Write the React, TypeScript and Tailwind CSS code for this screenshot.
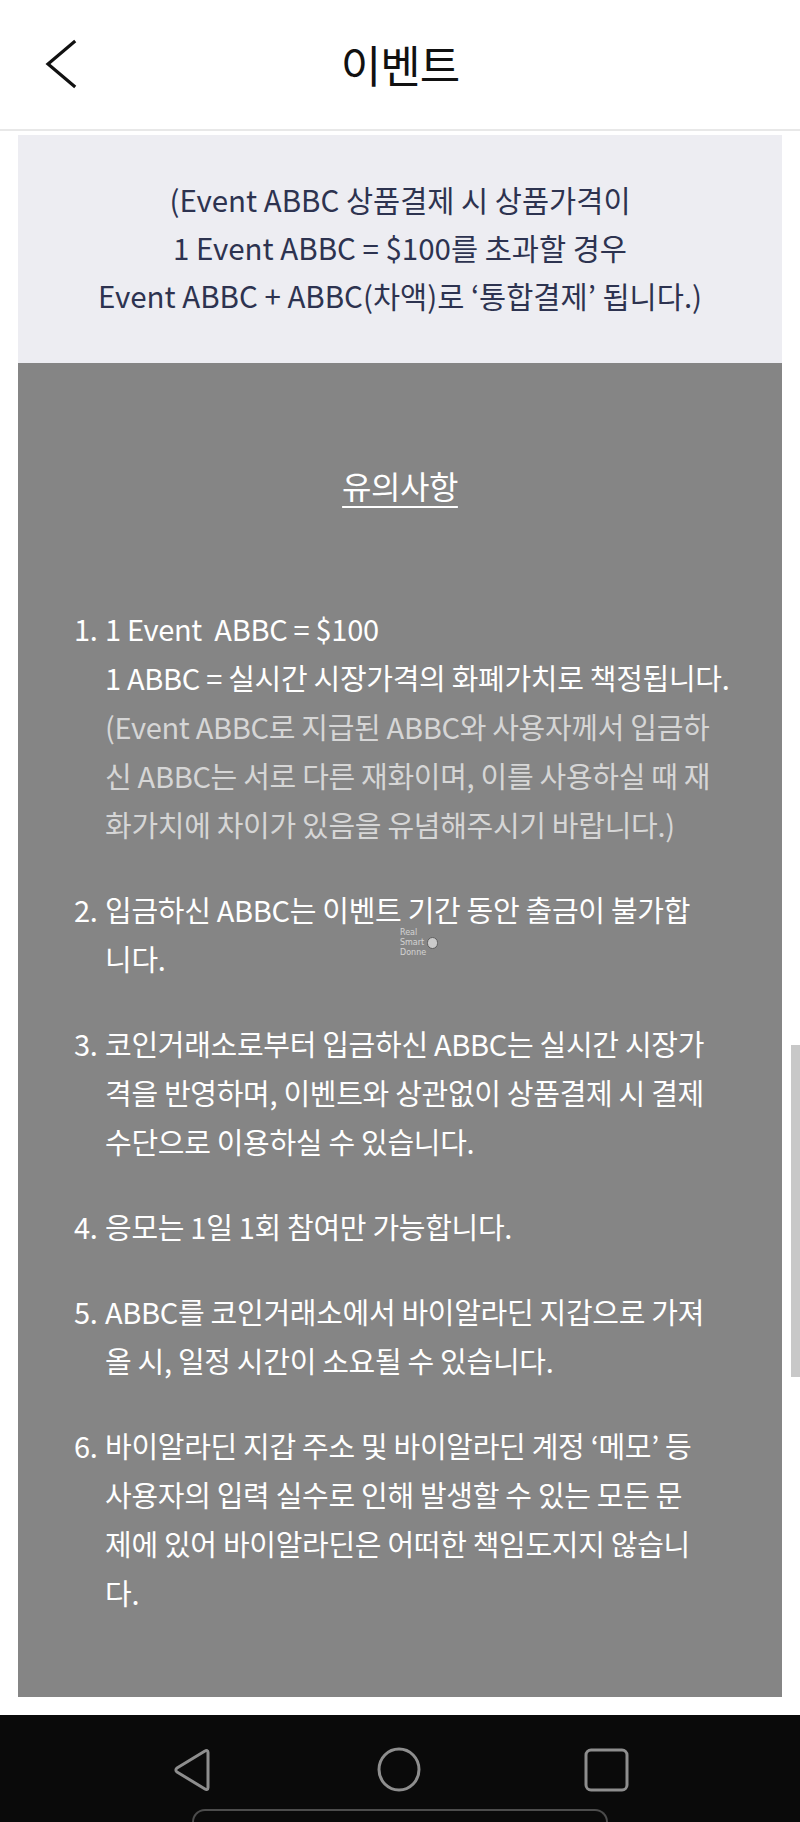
const font = { fontFamily: "'Noto Sans CJK KR', 'Noto Sans', sans-serif" }

type Notice = {
  no: string
  lines: { text: string; dim?: boolean }[]
}

const notices: Notice[] = [
  {
    no: '1.',
    lines: [
      { text: '1 Event  ABBC = $100' },
      { text: '1 ABBC = 실시간 시장가격의 화폐가치로 책정됩니다.' },
      { text: '(Event ABBC로 지급된 ABBC와 사용자께서 입금하', dim: true },
      { text: '신 ABBC는 서로 다른 재화이며, 이를 사용하실 때 재', dim: true },
      { text: '화가치에 차이가 있음을 유념해주시기 바랍니다.)', dim: true },
    ],
  },
  {
    no: '2.',
    lines: [{ text: '입금하신 ABBC는 이벤트 기간 동안 출금이 불가합' }, { text: '니다.' }],
  },
  {
    no: '3.',
    lines: [
      { text: '코인거래소로부터 입금하신 ABBC는 실시간 시장가' },
      { text: '격을 반영하며, 이벤트와 상관없이 상품결제 시 결제' },
      { text: '수단으로 이용하실 수 있습니다.' },
    ],
  },
  {
    no: '4.',
    lines: [{ text: '응모는 1일 1회 참여만 가능합니다.' }],
  },
  {
    no: '5.',
    lines: [
      { text: 'ABBC를 코인거래소에서 바이알라딘 지갑으로 가져' },
      { text: '올 시, 일정 시간이 소요될 수 있습니다.' },
    ],
  },
  {
    no: '6.',
    lines: [
      { text: '바이알라딘 지갑 주소 및 바이알라딘 계정 ‘메모’ 등' },
      { text: '사용자의 입력 실수로 인해 발생할 수 있는 모든 문' },
      { text: '제에 있어 바이알라딘은 어떠한 책임도지지 않습니' },
      { text: '다.' },
    ],
  },
]

function NoticeItem({ no, lines }: Notice) {
  return (
    <div className="flex text-[29px] leading-[49px] tracking-[-0.3px]">
      <span className="w-[31px] shrink-0 text-white">{no}</span>
      <div className="flex flex-col">
        {lines.map((l) => (
          <span key={l.text} className={l.dim ? 'text-[#d6d6d6] whitespace-pre' : 'text-white whitespace-pre'}>
            {l.text}
          </span>
        ))}
      </div>
    </div>
  )
}

function NavBar() {
  return (
    <div className="h-[107px] bg-[#0a0a0a] flex flex-col items-center">
      <div className="flex items-center justify-center gap-[163px] pt-[32px]">
        <svg width="42" height="44" viewBox="0 0 42 44" fill="none" stroke="#8e8e8e" strokeWidth="3" strokeLinejoin="round">
          <path d="M36 4.5 C36 2.5 34.5 2 33 3 L5 20 C3.5 21 3.5 23 5 24 L33 41 C34.5 42 36 41.5 36 39.5 Z" />
        </svg>
        <svg width="44" height="45" viewBox="0 0 44 45" fill="none" stroke="#8e8e8e" strokeWidth="3">
          <ellipse cx="22" cy="22.5" rx="20" ry="20.5" />
        </svg>
        <svg width="45" height="44" viewBox="0 0 45 44" fill="none" stroke="#8e8e8e" strokeWidth="3">
          <rect x="2" y="2" width="41" height="40" rx="5" />
        </svg>
      </div>
      <div className="mt-[17px] w-[416px] flex-1 rounded-t-[26px] border-x-2 border-t-2 border-[#4c4c4c]" />
    </div>
  )
}

export default function App() {
  return (
    <div className="w-[800px] h-[1822px] bg-white flex flex-col relative overflow-hidden" style={font}>
      <header className="h-[131px] shrink-0 border-b-2 border-[#e8e8e8] relative flex items-center justify-center">
        {/* back arrow */}
        <svg className="absolute left-[44px] top-[39px]" width="34" height="50" viewBox="0 0 34 50" fill="none" stroke="#111" strokeWidth="3.2" strokeLinecap="square">
          <polyline points="30,3 4,25 30,47" />
        </svg>
        <h1 className="text-[44px] leading-none text-[#111] tracking-[-1px] -mt-[2px]">이벤트</h1>
      </header>

      <main className="flex-1 flex flex-col px-[18px] pt-[4px]">
        <section className="h-[228px] bg-[#ededf2] flex flex-col items-center pt-[40px] text-[29.5px] leading-[48px] text-[#2d3350]">
          <p className="whitespace-pre">(Event ABBC 상품결제 시 상품가격이</p>
          <p className="whitespace-pre">1 Event ABBC = $100를 초과할 경우</p>
          <p className="whitespace-pre">Event ABBC + ABBC(차액)로 ‘통합결제’ 됩니다.)</p>
        </section>

        <section className="h-[1334px] bg-[#858585] relative flex flex-col pl-[56px] pt-[101px]">
          <h2 className="self-center -ml-[56px] text-[32px] leading-[42px] text-white underline underline-offset-[7px] decoration-2 tracking-[-0.5px]">
            유의사항
          </h2>
          <div className="mt-[98px] flex flex-col gap-[36px]">
            {notices.map((n) => (
              <NoticeItem key={n.no} {...n} />
            ))}
          </div>

          {/* small watermark stamp */}
          <div className="absolute left-[382px] top-[565px] flex items-center gap-[1px] opacity-80">
            <div className="flex flex-col text-[8px] leading-[10px] text-[#e6e6e6]" style={{ fontFamily: "'DejaVu Sans', sans-serif" }}>
              <span>Real</span>
              <span>Smart</span>
              <span>Donne</span>
            </div>
            <div className="w-[11px] h-[12px] rounded-full bg-[#dcdcdc] border border-[#555]" />
          </div>
        </section>
      </main>

      <div className="h-[18px] shrink-0" />
      <NavBar />

      {/* scroll indicator */}
      <div className="absolute right-0 top-[1045px] w-[9px] h-[332px] bg-[#c8c8c8]" />
    </div>
  )
}
